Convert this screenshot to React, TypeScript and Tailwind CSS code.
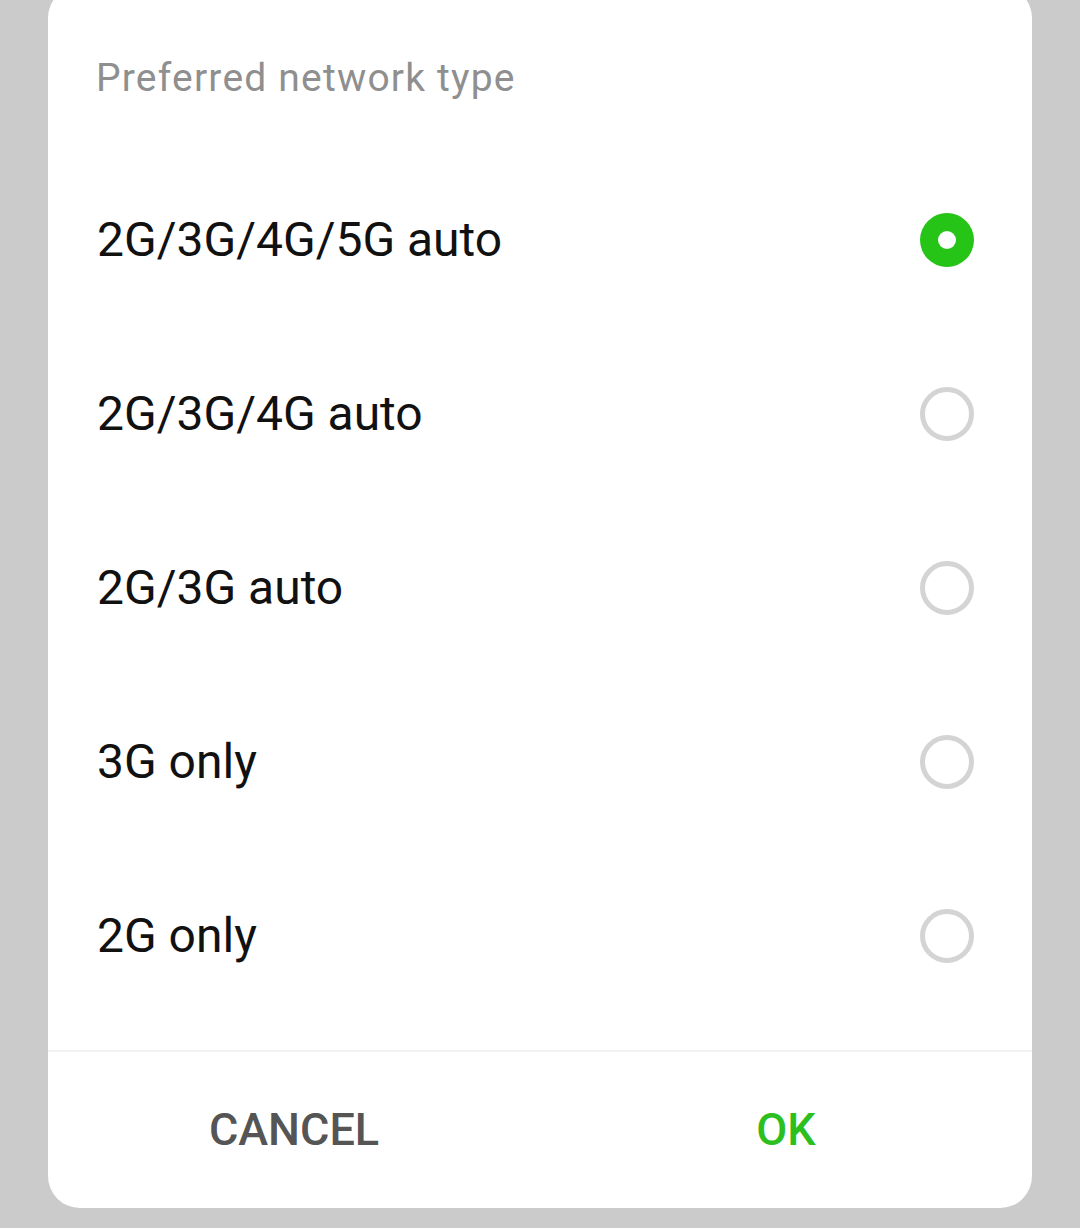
import React, { useState } from 'react';

const options = ['2G/3G/4G/5G auto', '2G/3G/4G auto', '2G/3G auto', '3G only', '2G only'];

const Radio: React.FC<{ checked: boolean }> = ({ checked }) =>
    checked ? (
        <span className="flex h-[54px] w-[54px] items-center justify-center rounded-full bg-[#25c417]">
            <span className="h-[18px] w-[18px] rounded-full bg-white" />
        </span>
    ) : (
        <span className="h-[54px] w-[54px] rounded-full border-[5px] border-[#d4d4d4]" />
    );

const App: React.FC = () => {
    const [selected, setSelected] = useState(0);

    return (
        <div className="h-[1228px] w-[1080px] overflow-hidden bg-[#cbcbcb]" style={{ fontFamily: 'Roboto, "Noto Sans", sans-serif' }}>
            <div className="mx-[48px] mt-[-14px] overflow-hidden rounded-[32px] bg-white">
                <div className="pl-[48px] pt-[70px] pb-[53px] text-[39px] leading-[44px] tracking-[1.2px] text-[#8f8f8f]">Preferred network type</div>

                {options.map((label, i) => (
                    <div
                        key={label}
                        onClick={() => setSelected(i)}
                        className="flex h-[174px] items-center justify-between pl-[49px] pr-[58px]"
                    >
                        <span className="text-[48px] leading-none text-[#111]">{label}</span>
                        <Radio checked={selected === i} />
                    </div>
                ))}

                <div className="mt-[27px] border-t-[2px] border-[#f2f2f2]" />

                <div className="grid h-[156px] grid-cols-2">
                    <button className="flex items-center justify-center text-[45px] font-medium text-[#555555]">CANCEL</button>
                    <button className="flex items-center justify-center text-[45px] font-medium text-[#2cbf1f]">OK</button>
                </div>
            </div>
        </div>
    );
};

export default App;
